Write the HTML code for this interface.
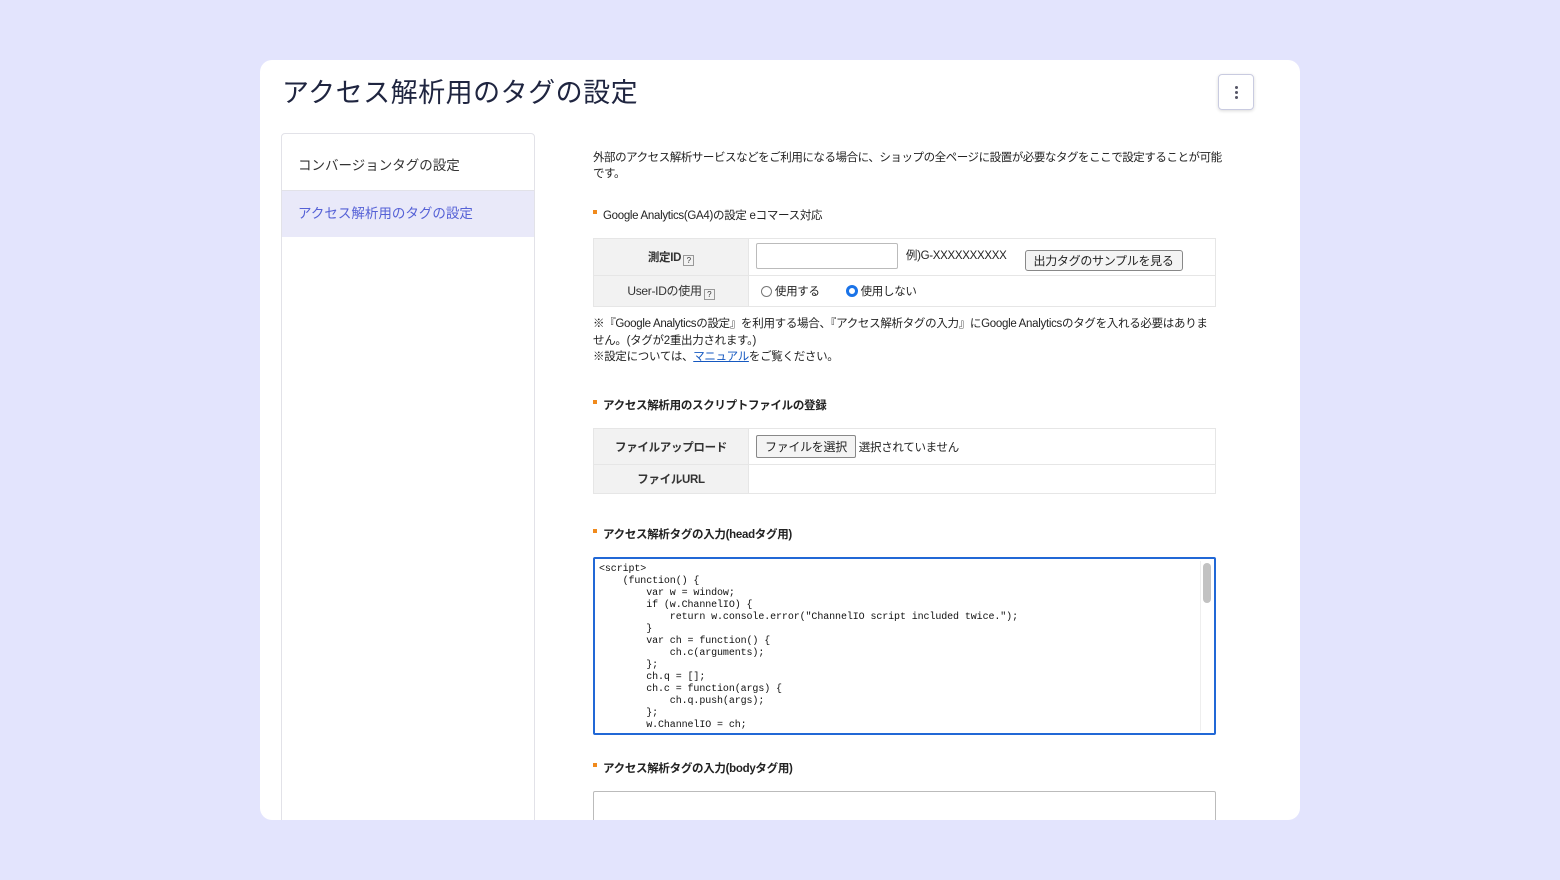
<!DOCTYPE html>
<html><head><meta charset="utf-8"><style>
*{box-sizing:border-box;margin:0;padding:0}
body{width:1560px;height:880px;background:#e3e4fd;font-family:"Liberation Sans","Noto Sans CJK JP",sans-serif;position:relative;overflow:hidden;color:#222}
.card{position:absolute;left:260px;top:60px;width:1040px;height:760px;background:#fff;border-radius:12px;overflow:hidden}
h1{position:absolute;left:22px;top:11px;font-size:27px;font-weight:400;color:#1f2540;letter-spacing:0.5px}
.menu{position:absolute;left:958px;top:14px;width:36px;height:36px;border:1px solid #c9cbe0;border-radius:4px;box-shadow:0 1px 3px rgba(0,0,0,.15);display:flex;flex-direction:column;align-items:center;justify-content:center;gap:2px}
.menu i{width:3px;height:3px;background:#556;border-radius:50%}
.side{position:absolute;left:21px;top:73px;width:254px;height:700px;border:1px solid #e2e2e8;border-radius:4px}
.side div{height:47px;line-height:45px;padding-left:16px;font-size:13.5px;color:#333}
.side .first{height:56px;line-height:64px}
.side .act{background:#e9e9f9;color:#5561d6;border-top:1px solid #e2e2e8}
.main{position:absolute;left:333px;top:90px;width:623px;font-size:11.5px;color:#222;letter-spacing:-0.3px}
.ab{position:absolute;left:0;white-space:nowrap}
.h{font-weight:bold;font-size:11.5px}
.h:before{content:"";display:inline-block;width:4px;height:4px;background:#f08a1c;margin-right:6px;vertical-align:5px}
table{border-collapse:collapse;width:623px;position:absolute;left:0}
td{border:1px solid #e6e6e6;font-size:11.5px;white-space:nowrap}
td.l{background:#f2f2f2;width:155px;text-align:center;font-weight:bold;color:#333}
.q{display:inline-block;width:11px;height:11px;border:1px solid #999;font-size:8px;line-height:9px;text-align:center;vertical-align:-2px;margin-left:2px;font-weight:normal}
.btn{display:inline-block;border:1px solid #888;border-radius:3px;background:#f4f4f4;padding:1px 8px;font-size:12px}
.code{position:absolute;left:0;top:407px;width:623px;height:178px;border:2px solid #2168d6;border-radius:2px;font-family:"Liberation Mono",monospace;font-size:10px;line-height:12px;padding:5px 4px;white-space:pre;overflow:hidden;color:#111;letter-spacing:-0.1px}
.sb{position:absolute;right:2px;top:2px;width:12px;height:170px;border-left:1px solid #eee}
.sb i{position:absolute;left:2px;top:2px;width:8px;height:40px;background:#c2c2c2;border-radius:4px}
a{color:#1558c0}
</style></head><body>
<div class="card">
<h1>アクセス解析用のタグの設定</h1>
<div class="menu"><i></i><i></i><i></i></div>
<div class="side"><div class="first">コンバージョンタグの設定</div><div class="act">アクセス解析用のタグの設定</div></div>
<div class="main">
<div class="ab" style="top:0;line-height:16px;letter-spacing:-0.45px">外部のアクセス解析サービスなどをご利用になる場合に、ショップの全ページに設置が必要なタグをここで設定することが可能<br>です。</div>
<div class="ab h" style="top:57px;font-weight:normal">Google Analytics(GA4)の設定 eコマース対応</div>
<table style="top:88px">
<tr style="height:37px"><td class="l">測定ID<span class="q">?</span></td><td style="padding-left:7px"><span style="display:inline-block;width:142px;height:26px;border:1px solid #bbb;border-radius:2px;vertical-align:middle"></span> <span style="margin-left:5px">例)G-XXXXXXXXXX</span><span class="btn" style="margin-left:18px;vertical-align:-6px">出力タグのサンプルを見る</span></td></tr>
<tr style="height:31px"><td class="l" style="font-weight:normal;font-size:12px">User-IDの使用<span class="q">?</span></td><td style="padding-left:12px"><span style="display:inline-block;width:11px;height:11px;border:1px solid #777;border-radius:50%;vertical-align:-2px"></span> 使用する<span style="display:inline-block;width:12px;height:12px;border:3px solid #1a73e8;border-radius:50%;vertical-align:-2px;margin-left:26px"></span> 使用しない</td></tr>
</table>
<div class="ab" style="top:166px;line-height:16.5px">※『Google Analyticsの設定』を利用する場合、『アクセス解析タグの入力』にGoogle Analyticsのタグを入れる必要はありま<br>せん。(タグが2重出力されます。)<br>※設定については、<a href="#">マニュアル</a>をご覧ください。</div>
<div class="ab h" style="top:247px">アクセス解析用のスクリプトファイルの登録</div>
<table style="top:278px">
<tr style="height:36px"><td class="l">ファイルアップロード</td><td style="padding-left:7px"><span class="btn" style="border-radius:2px;padding:2px 8px">ファイルを選択</span> 選択されていません</td></tr>
<tr style="height:29px"><td class="l">ファイルURL</td><td></td></tr>
</table>
<div class="ab h" style="top:376px">アクセス解析タグの入力(headタグ用)</div>
<div class="code">&lt;script&gt;
    (function() {
        var w = window;
        if (w.ChannelIO) {
            return w.console.error("ChannelIO script included twice.");
        }
        var ch = function() {
            ch.c(arguments);
        };
        ch.q = [];
        ch.c = function(args) {
            ch.q.push(args);
        };
        w.ChannelIO = ch;<div class="sb"><i></i></div></div>
<div class="ab h" style="top:610px">アクセス解析タグの入力(bodyタグ用)</div>
<div class="ab" style="top:641px;width:623px;height:60px;border:1px solid #bbb;border-radius:2px"></div>
</div>
</div>
</body></html>
